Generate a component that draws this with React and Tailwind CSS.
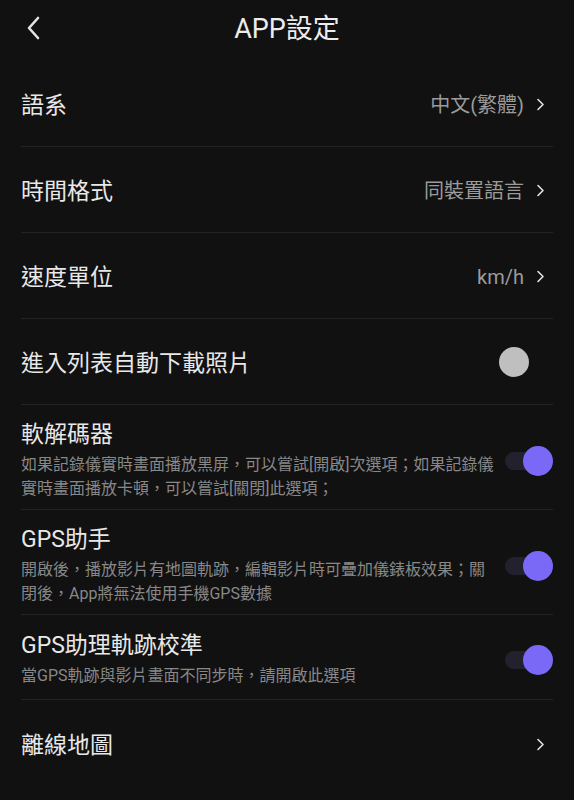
import React from 'react';

const font = { fontFamily: 'Roboto, "Noto Sans CJK TC", sans-serif' };

const Chevron = () => (
    <svg width="9" height="13" viewBox="0 0 9 13" fill="none" className="shrink-0">
        <path d="M2 1.5l5 5-5 5" stroke="#e2e2e2" strokeWidth="1.6" strokeLinecap="round" strokeLinejoin="round" />
    </svg>
);

const Toggle = ({ on }) => (
    <div className="relative w-[54px] h-[30px] shrink-0">
        {on && <div className="absolute left-[6px] right-[3px] top-[6px] h-[18px] rounded-full bg-[#23212d]" />}
        <div
            className={`absolute top-0 w-[30px] h-[30px] rounded-full ${on ? 'right-0 bg-[#7a69f6]' : 'left-0 bg-[#bfbfbf]'}`}
        />
    </div>
);

const LinkRow = ({ label, value, last }) => (
    <div className={`h-[86px] flex items-center justify-between ${last ? '' : 'border-b border-[#232323]'}`}>
        <span className="pt-[6px] text-[23px] text-[#e8e8e8]">{label}</span>
        <div className="flex items-center gap-[12px] pr-[8px] pt-[2px]">
            {value && <span className="text-[20px] text-[#9b9b9b]">{value}</span>}
            <Chevron />
        </div>
    </div>
);

const ToggleRow = ({ label, lines, on, pt = 'pt-[15px]', pb = 'pb-[8px]' }) => (
    <div className={`flex items-center justify-between border-b border-[#232323] ${lines ? `${pt} ${pb}` : 'h-[86px]'}`}>
        <div className="flex flex-col">
            <span className={`text-[23px] leading-[30px] text-[#e8e8e8] ${lines ? '' : 'pt-[4px]'}`}>{label}</span>
            {lines && (
                <div className="mt-[3px] text-[16px] leading-[24px] text-[#888888] whitespace-nowrap">
                    {lines.map(l => <div key={l}>{l}</div>)}
                </div>
            )}
        </div>
        <Toggle on={on} />
    </div>
);

export default function App() {
    return (
        <div className="w-[574px] min-h-[800px] bg-[#111111]" style={font}>
            {/* Header */}
            <div className="relative h-[61px] flex items-center justify-center">
                <svg className="absolute left-[24px] top-[15px]" width="20" height="26" viewBox="0 0 20 26" fill="none">
                    <path d="M14 3L5 13l9 10" stroke="#e4e4e4" strokeWidth="2.6" strokeLinecap="round" strokeLinejoin="round" />
                </svg>
                <span className="text-[27px] text-[#ececec] -mt-[2px]">APP設定</span>
            </div>

            <div className="px-[21px]">
                <LinkRow label="語系" value="中文(繁體)" />
                <LinkRow label="時間格式" value="同裝置語言" />
                <LinkRow label="速度單位" value="km/h" />
                <ToggleRow label="進入列表自動下載照片" on={false} />
                <ToggleRow
                    label="軟解碼器"
                    on
                    lines={['如果記錄儀實時畫面播放黑屏，可以嘗試[開啟]次選項；如果記錄儀', '實時畫面播放卡頓，可以嘗試[關閉]此選項；']}
                />
                <ToggleRow
                    label="GPS助手"
                    on
                    lines={['開啟後，播放影片有地圖軌跡，編輯影片時可疊加儀錶板效果；關', '閉後，App將無法使用手機GPS數據']}
                />
                <ToggleRow
                    label="GPS助理軌跡校準"
                    on
                    pt="pt-[16px]"
                    pb="pb-[11px]"
                    lines={['當GPS軌跡與影片畫面不同步時，請開啟此選項']}
                />
                <LinkRow label="離線地圖" last />
            </div>
        </div>
    );
}
